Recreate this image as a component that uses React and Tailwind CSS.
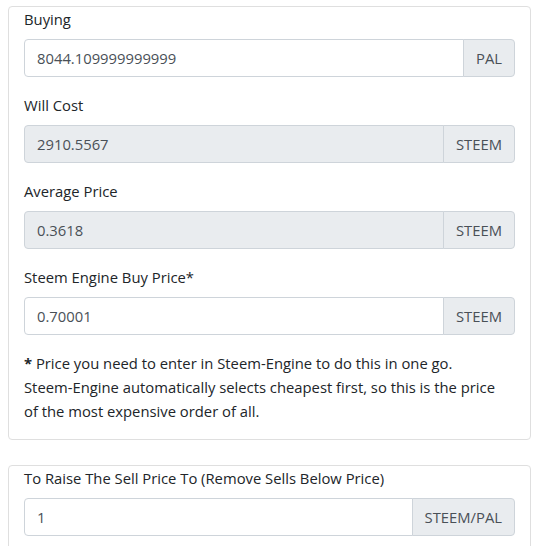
import React from 'react';

const FONT = { fontFamily: '"Open Sans", "Noto Sans", sans-serif' };

function Field({ label, value, unit, disabled }) {
  return (
    <div className="mb-4">
      <label className="block mb-2 leading-6 text-[#212529]">{label}</label>
      <div className="flex h-[38px]">
        <input
          readOnly
          value={value}
          className={`flex-1 min-w-0 px-3 border border-[#ced4da] rounded-l-[4px] text-[#495057] outline-none ${disabled ? 'bg-[#e9ecef]' : 'bg-white'}`}
        />
        <span className="flex items-center px-3 -ml-px border border-[#ced4da] rounded-r-[4px] bg-[#e9ecef] text-[#495057]">
          {unit}
        </span>
      </div>
    </div>
  );
}

export default function App() {
  return (
    <div className="bg-white min-h-[546px] pl-2 pr-1 pt-[6px] text-[14.8px]" style={FONT}>
      {/* Order calculator */}
      <div className="border border-[#dfdfdf] rounded-[4px] px-[15px]">
        <Field label="Buying" value="8044.109999999999" unit="PAL" />
        <Field label="Will Cost" value="2910.5567" unit="STEEM" disabled />
        <Field label="Average Price" value="0.3618" unit="STEEM" disabled />
        <Field label="Steem Engine Buy Price*" value="0.70001" unit="STEEM" />
        <p className="mb-4 leading-6 text-[#212529]">
          <b>*</b>&nbsp;Price you need to enter in Steem-Engine to do this in one go.
          <br />
          Steem-Engine automatically selects cheapest first, so this is the price
          <br />
          of the most expensive order of all.
        </p>
      </div>

      {/* Raise sell price */}
      <div className="mt-[25px] border border-[#dfdfdf] rounded-[4px] px-[15px]">
        <Field label="To Raise The Sell Price To (Remove Sells Below Price)" value="1" unit="STEEM/PAL" />
      </div>
    </div>
  );
}
